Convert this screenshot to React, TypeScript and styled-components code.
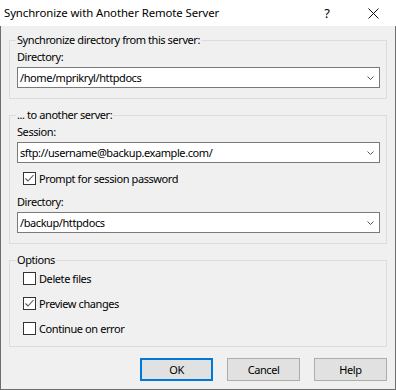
import React from "react";
import styled, { createGlobalStyle } from "styled-components";

const Global = createGlobalStyle`
  html, body { margin: 0; padding: 0; background: #f0f0f0; }
  * { box-sizing: border-box; }
`;

const Window = styled.div`
  width: 396px;
  height: 390px;
  background: #f0f0f0;
  border: 1px solid #6e6e6e;
  border-top: none;
  font-family: "Noto Sans", "Segoe UI", sans-serif;
  font-size: 11px;
  letter-spacing: -0.42px;
  color: #000;
  display: flex;
  flex-direction: column;
`;

const TitleBar = styled.div`
  height: 26px;
  background: #fff;
  display: flex;
  align-items: center;
  margin: 0 -1px;
  padding-left: 4px;
`;

const TitleText = styled.div`
  flex: 1;
  font-size: 11.4px;
  letter-spacing: -0.1px;
  line-height: 16px;
`;

const TitleButton = styled.div<{ $w: number }>`
  width: ${(p) => p.$w}px;
  height: 26px;
  display: flex;
  align-items: center;
  justify-content: center;
  font-size: 13px;
  letter-spacing: 0;
`;

const Body = styled.div`
  flex: 1;
  display: flex;
  flex-direction: column;
  padding: 6px 8px 0 8px;
`;

const Group = styled.fieldset<{ $mt: number }>`
  margin: ${(p) => p.$mt}px 0 0 0;
  padding: 0 6px 0 7px;
  border: 1px solid #dcdcdc;
  min-width: 0;
`;

const Legend = styled.legend`
  padding: 0 1px;
  margin-left: -1px;
  line-height: 16px;
`;

const Label = styled.div<{ $mt?: number }>`
  line-height: 15px;
  margin-top: ${(p) => p.$mt ?? 0}px;
`;

const Combo = styled.div<{ $mt?: number; $mb?: number }>`
  height: 21px;
  margin-top: ${(p) => p.$mt ?? 0}px;
  margin-bottom: ${(p) => p.$mb ?? 0}px;
  background: #fff;
  border: 1px solid #7a7a7a;
  display: flex;
  align-items: center;
  padding-left: 2px;
  padding-right: 5px;
`;

const ComboText = styled.div`
  flex: 1;
  line-height: 15px;
`;

const CheckRow = styled.label<{ $mt: number; $ml: number }>`
  display: flex;
  align-items: center;
  gap: 3px;
  height: 15px;
  margin-top: ${(p) => p.$mt}px;
  margin-left: ${(p) => p.$ml}px;
  line-height: 15px;
`;

const Box = styled.span`
  width: 13px;
  height: 13px;
  border: 1px solid #333;
  background: #fff;
  display: flex;
  align-items: center;
  justify-content: center;
`;

const Spacer = styled.div`
  height: 10px;
`;

const ButtonRow = styled.div`
  display: flex;
  justify-content: flex-end;
  gap: 14px;
  margin-top: 11px;
`;

const Button = styled.div<{ $default?: boolean }>`
  width: 73px;
  height: 23px;
  background: #e1e1e1;
  border: ${(p) => (p.$default ? "2px solid #0078d7" : "1px solid #adadad")};
  display: flex;
  align-items: center;
  justify-content: center;
  line-height: 15px;
`;

const Chevron = () => (
  <svg width="7" height="4" viewBox="0 0 7 4">
    <polyline points="0.5,0.5 3.5,3.5 6.5,0.5" fill="none" stroke="#555" strokeWidth="1" />
  </svg>
);

const Check = ({ on }: { on: boolean }) => (
  <Box>
    {on && (
      <svg width="11" height="11" viewBox="0 0 11 11">
        <polyline points="1.5,5.5 4,8 9.5,2" fill="none" stroke="#555" strokeWidth="1.1" />
      </svg>
    )}
  </Box>
);

const Close = () => (
  <svg width="11" height="11" viewBox="0 0 11 11">
    <path d="M0.5 0.5 L10.5 10.5 M10.5 0.5 L0.5 10.5" stroke="#111" strokeWidth="1" />
  </svg>
);

export default function App() {
  return (
    <>
      <Global />
      <Window>
        <TitleBar>
          <TitleText>Synchronize with Another Remote Server</TitleText>
          <TitleButton $w={46}>?</TitleButton>
          <TitleButton $w={46}>
            <Close />
          </TitleButton>
        </TitleBar>
        <Body>
          <Group $mt={0}>
            <Legend>Synchronize directory from this server:</Legend>
            <Label $mt={1}>Directory:</Label>
            <Combo $mt={3} $mb={10}>
              <ComboText>/home/mprikryl/httpdocs</ComboText>
              <Chevron />
            </Combo>
          </Group>
          <Group $mt={8}>
            <Legend>... to another server:</Legend>
            <Label $mt={1}>Session:</Label>
            <Combo $mt={3}>
              <ComboText>sftp://username@backup.example.com/</ComboText>
              <Chevron />
            </Combo>
            <CheckRow $mt={8} $ml={6}>
              <Check on={true} />
              Prompt for session password
            </CheckRow>
            <Label $mt={8}>Directory:</Label>
            <Combo $mt={3} $mb={10}>
              <ComboText>/backup/httpdocs</ComboText>
              <Chevron />
            </Combo>
          </Group>
          <Group $mt={8}>
            <Legend>Options</Legend>
            <CheckRow $mt={3} $ml={6}>
              <Check on={false} />
              Delete files
            </CheckRow>
            <CheckRow $mt={10} $ml={6}>
              <Check on={true} />
              Preview changes
            </CheckRow>
            <CheckRow $mt={10} $ml={6}>
              <Check on={false} />
              Continue on error
            </CheckRow>
            <Spacer />
          </Group>
          <ButtonRow>
            <Button $default>OK</Button>
            <Button>Cancel</Button>
            <Button>Help</Button>
          </ButtonRow>
        </Body>
      </Window>
    </>
  );
}
